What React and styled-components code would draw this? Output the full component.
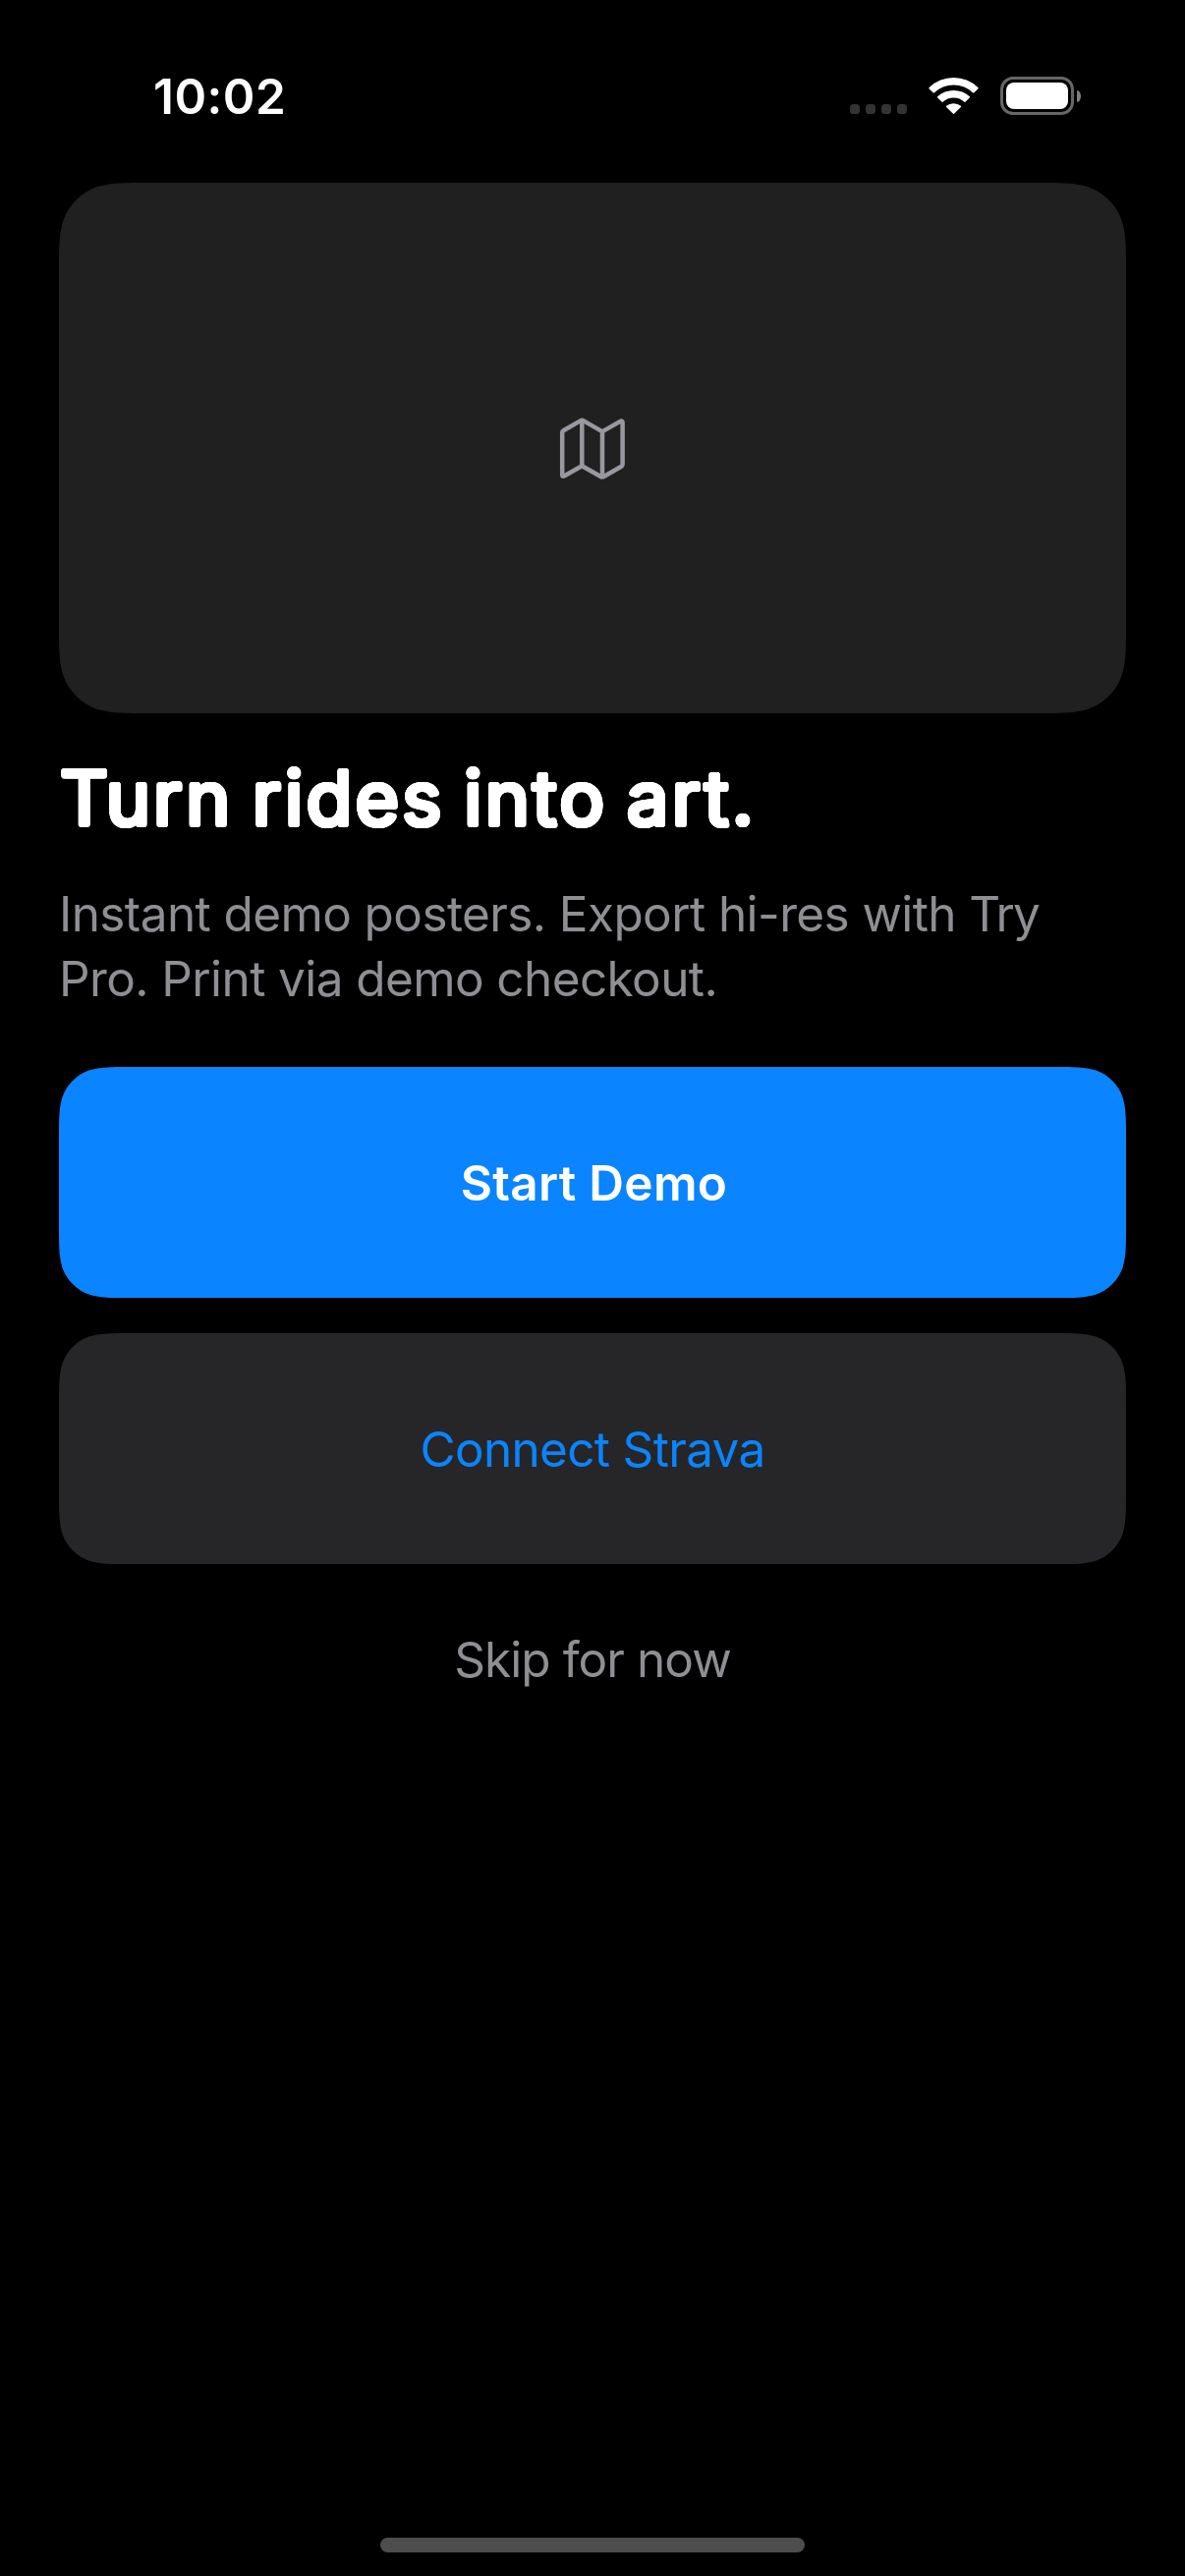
import React from "react";
import styled, { createGlobalStyle } from "styled-components";

const GlobalStyle = createGlobalStyle`
  * { box-sizing: border-box; }
  body {
    margin: 0;
    background: #000;
    font-family: Inter, "Liberation Sans", sans-serif;
  }
`;

/* Continuous-curvature rounded rectangle. */
const smoothRect = (w, h, r) => {
  const k = [1.528665, 1.088493, 0.868407, 0.631494, 0.372824, 0.169059, 0.074911].map((v) => v * r);
  const [a, b, c, d, e, f, g] = k;
  return `path("M${a} 0 L${w - a} 0 C${w - b} 0 ${w - c} 0 ${w - d} ${g} C${w - e} ${f} ${w - f} ${e} ${w - g} ${d} C${w} ${c} ${w} ${b} ${w} ${a} L${w} ${h - a} C${w} ${h - b} ${w} ${h - c} ${w - g} ${h - d} C${w - f} ${h - e} ${w - e} ${h - f} ${w - d} ${h - g} C${w - c} ${h} ${w - b} ${h} ${w - a} ${h} L${a} ${h} C${b} ${h} ${c} ${h} ${d} ${h - g} C${e} ${h - f} ${f} ${h - e} ${g} ${h - d} C0 ${h - c} 0 ${h - b} 0 ${h - a} L0 ${a} C0 ${b} 0 ${c} ${g} ${d} C${f} ${e} ${e} ${f} ${d} ${g} C${c} 0 ${b} 0 ${a} 0 Z")`;
};

/* Thickens a regular face evenly in every direction, which rounds its terminals. */
const roundedStroke = (radius) =>
  [radius, radius / 2]
    .flatMap((r) =>
      Array.from({ length: 20 }, (_, i) => {
        const t = (i / 20) * Math.PI * 2;
        return `${(r * Math.cos(t)).toFixed(2)}px ${(r * Math.sin(t)).toFixed(2)}px 0 #fff`;
      })
    )
    .join(", ");

const Screen = styled.div`
  display: flex;
  flex-direction: column;
  width: 1206px;
  height: 2622px;
  background: #000;
`;

const StatusBar = styled.header`
  display: flex;
  justify-content: space-between;
  height: 186px;
  padding: 68px 106px 0 156px;
`;

const Clock = styled.time`
  color: #fff;
  font-size: 49.5px;
  font-weight: 600;
  letter-spacing: 0.5px;
  line-height: 60px;
`;

const Indicators = styled.div`
  display: flex;
  align-items: center;
  height: 59px;
`;

const SignalDots = styled.div`
  display: flex;
  gap: 6px;
  margin: 27px 22px 0 0;
`;

const Dot = styled.span`
  width: 10px;
  height: 10px;
  border-radius: 3.6px;
  background: #333;
`;

const WifiIcon = styled.svg`
  display: block;
  width: 51px;
  height: 37px;
  margin-right: 22px;
  fill: #fff;
`;

const Battery = styled.div`
  display: flex;
  align-items: center;
  gap: 3px;
`;

const BatteryShell = styled.div`
  width: 75px;
  height: 39px;
  padding: 3px;
  border: 3px solid #666;
  border-radius: 13px;
`;

const BatteryLevel = styled.div`
  width: 100%;
  height: 100%;
  border-radius: 8px;
  background: #fff;
`;

const BatteryCap = styled.span`
  width: 4px;
  height: 12px;
  border-radius: 0 4px 4px 0 / 0 6px 6px 0;
  background: #808080;
`;

const Content = styled.main`
  display: flex;
  flex: 1;
  flex-direction: column;
  padding: 0 60px;
`;

const Preview = styled.section`
  display: flex;
  align-items: center;
  justify-content: center;
  height: 540px;
  background: #202020;
  clip-path: ${smoothRect(1086, 540, 60)};
`;

const MapIcon = styled.svg`
  width: 70px;
  height: 70px;
  fill: none;
  stroke: #98989f;
  stroke-width: 4.5;
  stroke-linecap: round;
  stroke-linejoin: round;
`;

const Title = styled.h1`
  margin: 36px 0 34px 1px;
  color: #fff;
  font-size: 76.4px;
  font-weight: 400;
  letter-spacing: 3.1px;
  word-spacing: -5px;
  line-height: 101px;
  white-space: nowrap;
  text-shadow: ${roundedStroke(2.3)};
`;

const Description = styled.p`
  margin: 0 0 57px;
  color: #8e8e93;
  font-size: 49.5px;
  letter-spacing: -0.6px;
  line-height: 66px;
`;

const Tight = styled.span`
  letter-spacing: -1.9px;
`;

const Actions = styled.div`
  display: flex;
  flex-direction: column;
  gap: 36px;
`;

const ActionButton = styled.button`
  height: 235px;
  padding: 0 0 0 ${(p) => (p.$primary ? "3px" : "0")};
  border: 0;
  background: ${(p) => (p.$primary ? "#0a84ff" : "#262628")};
  clip-path: ${smoothRect(1086, 235, 48)};
  color: ${(p) => (p.$primary ? "#fff" : "#0a84ff")};
  font-family: inherit;
  font-size: 49.5px;
  font-weight: ${(p) => (p.$primary ? 600 : 400)};
  letter-spacing: ${(p) => (p.$primary ? "0.29px" : "-0.68px")};
`;

const SkipButton = styled.button`
  align-self: center;
  margin-top: 67px;
  padding: 0;
  border: 0;
  background: none;
  color: #8e8e93;
  font-family: inherit;
  font-size: 49.5px;
  letter-spacing: -0.95px;
  line-height: 60px;
`;

const HomeIndicator = styled.div`
  align-self: center;
  width: 432px;
  height: 15px;
  margin-bottom: 24px;
  border-radius: 8px;
  background: #4d4d4d;
`;

export default function App() {
  return (
    <>
      <GlobalStyle />
      <Screen>
        <StatusBar>
          <Clock>10:02</Clock>
          <Indicators>
            <SignalDots>
              <Dot />
              <Dot />
              <Dot />
              <Dot />
            </SignalDots>
            <WifiIcon viewBox="0 0 51 37">
              <path d="M.7 10.1A35.5 35.5 0 0 1 50.3 10.1Q51 10.8 50.3 11.5L46.2 15.4Q45.7 15.8 45.2 15.4A28.2 28.2 0 0 0 5.8 15.4Q5.3 15.8 4.8 15.4L.7 11.5Q0 10.8 .7 10.1Z" />
              <path d="M9.2 19.2A24.2 24.2 0 0 1 41.8 19.2Q42.4 19.8 41.8 20.4L37.4 24.7Q36.9 25.1 36.4 24.7A15.9 15.9 0 0 0 14.6 24.7Q14.1 25.1 13.6 24.7L9.2 20.4Q8.6 19.8 9.2 19.2Z" />
              <path d="M18.1 28.7A12 12 0 0 1 32.9 28.7Q33.5 29.3 32.9 29.9L26 36.7Q25.5 37.1 25 36.7L18.1 29.9Q17.5 29.3 18.1 28.7Z" />
            </WifiIcon>
            <Battery>
              <BatteryShell>
                <BatteryLevel />
              </BatteryShell>
              <BatteryCap />
            </Battery>
          </Indicators>
        </StatusBar>
        <Content>
          <Preview>
            <MapIcon viewBox="0 0 70 70">
              <path d="M4.2 19.3Q4.2 18 5.4 17.3L22.6 7.4Q24.3 6.4 26 7.4L43.4 17.4Q45 18.3 46.6 17.4L62.8 8.1Q65.6 6.7 65.6 9V51.6Q65.6 53 64.4 53.7L46.7 64Q45 65 43.3 64L24.3 53.2L6.2 63.5Q4.2 64.4 4.2 62.4Z" />
              <path d="M24.3 7V53M45 18.3V64.5" strokeLinecap="butt" />
            </MapIcon>
          </Preview>
          <Title>Turn rides into art.</Title>
          <Description>
            Instant demo posters. Export hi-res with <Tight>Try</Tight>
            <br />
            Pro. Print via demo checkout.
          </Description>
          <Actions>
            <ActionButton $primary>Start Demo</ActionButton>
            <ActionButton>Connect Strava</ActionButton>
          </Actions>
          <SkipButton>Skip for now</SkipButton>
        </Content>
        <HomeIndicator />
      </Screen>
    </>
  );
}
